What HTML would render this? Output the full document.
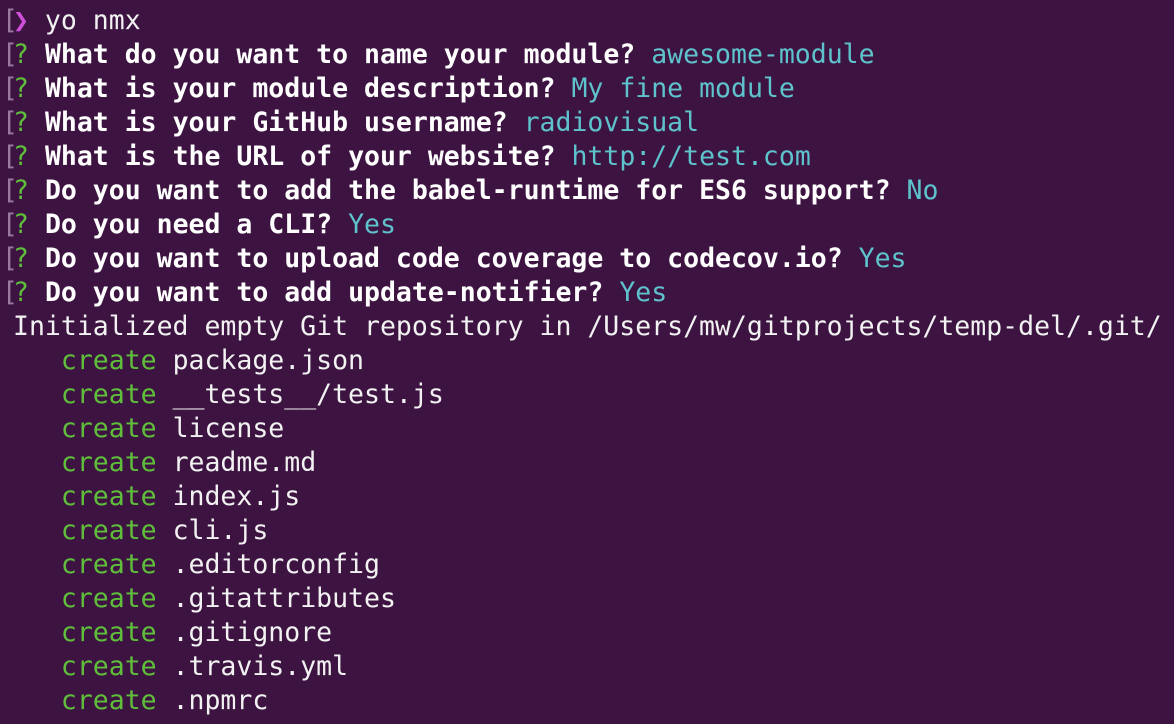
<!DOCTYPE html>
<html><head><meta charset="utf-8"><style>
html,body{margin:0;padding:0;}
body{width:1174px;height:724px;overflow:hidden;background:#3d1441;font-family:"DejaVu Sans Mono","Liberation Mono",monospace;font-size:26.5px;color:#f2f2f2;position:relative;}
.l{position:absolute;left:13px;height:34px;line-height:34px;white-space:pre;}
.br{position:absolute;left:-11px;color:#9a7aa0;font-weight:normal;}
.q{color:#5fbf3a;}
.b{font-weight:bold;color:#fff;}
.c{color:#5ec3cc;}
.g{color:#5fbf3a;}
.p{color:#d04fd8;}
</style></head><body>
<div style="position:absolute;left:20px;top:-6px;width:900px;height:6px;border-top:3px dotted #6a6aff;"></div>
<div class="l" style="top:4px"><span class="br">[</span><span class="p">❯</span> yo nmx</div>
<div class="l" style="top:38px"><span class="br">[</span><span class="q">?</span> <span class="b">What do you want to name your module?</span> <span class="c">awesome-module</span></div>
<div class="l" style="top:72px"><span class="br">[</span><span class="q">?</span> <span class="b">What is your module description?</span> <span class="c">My fine module</span></div>
<div class="l" style="top:106px"><span class="br">[</span><span class="q">?</span> <span class="b">What is your GitHub username?</span> <span class="c">radiovisual</span></div>
<div class="l" style="top:140px"><span class="br">[</span><span class="q">?</span> <span class="b">What is the URL of your website?</span> <span class="c">http://test.com</span></div>
<div class="l" style="top:174px"><span class="br">[</span><span class="q">?</span> <span class="b">Do you want to add the babel-runtime for ES6 support?</span> <span class="c">No</span></div>
<div class="l" style="top:208px"><span class="br">[</span><span class="q">?</span> <span class="b">Do you need a CLI?</span> <span class="c">Yes</span></div>
<div class="l" style="top:242px"><span class="br">[</span><span class="q">?</span> <span class="b">Do you want to upload code coverage to codecov.io?</span> <span class="c">Yes</span></div>
<div class="l" style="top:276px"><span class="br">[</span><span class="q">?</span> <span class="b">Do you want to add update-notifier?</span> <span class="c">Yes</span></div>
<div class="l" style="top:310px">Initialized empty Git repository in /Users/mw/gitprojects/temp-del/.git/</div>
<div class="l" style="top:344px">   <span class="g">create</span> package.json</div>
<div class="l" style="top:378px">   <span class="g">create</span> __tests__/test.js</div>
<div class="l" style="top:412px">   <span class="g">create</span> license</div>
<div class="l" style="top:446px">   <span class="g">create</span> readme.md</div>
<div class="l" style="top:480px">   <span class="g">create</span> index.js</div>
<div class="l" style="top:514px">   <span class="g">create</span> cli.js</div>
<div class="l" style="top:548px">   <span class="g">create</span> .editorconfig</div>
<div class="l" style="top:582px">   <span class="g">create</span> .gitattributes</div>
<div class="l" style="top:616px">   <span class="g">create</span> .gitignore</div>
<div class="l" style="top:650px">   <span class="g">create</span> .travis.yml</div>
<div class="l" style="top:684px">   <span class="g">create</span> .npmrc</div>
</body></html>
